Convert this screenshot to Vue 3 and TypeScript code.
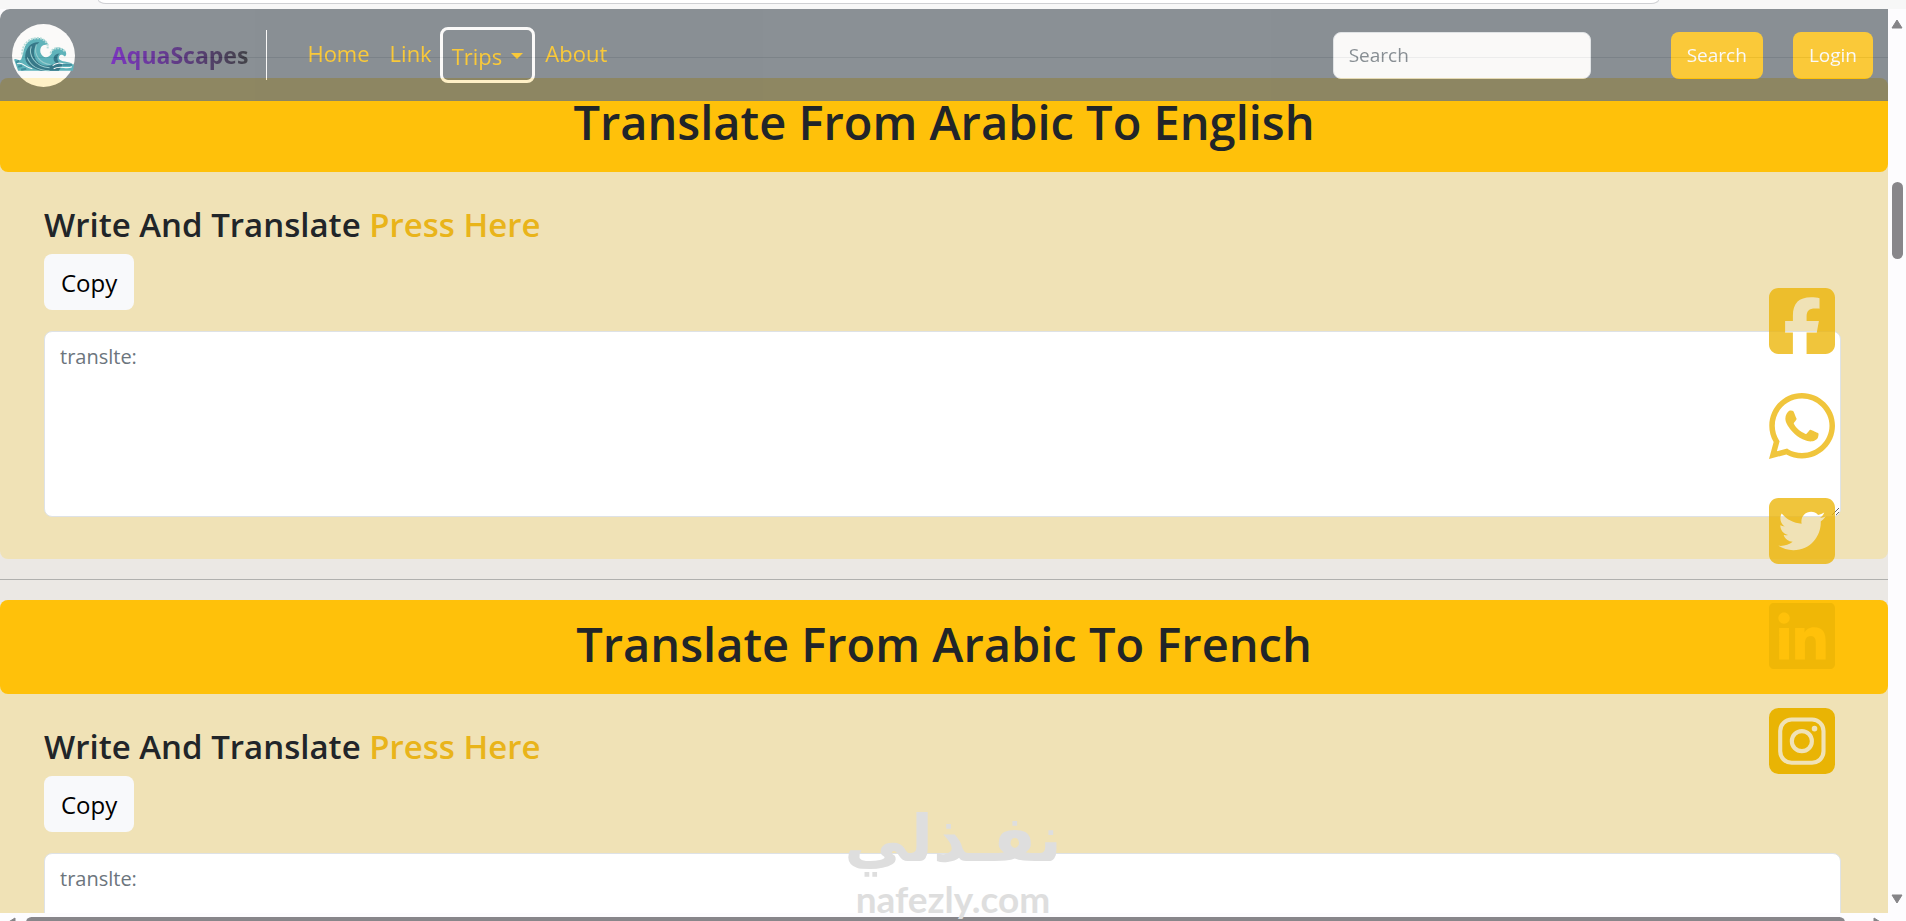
<script setup lang="ts">
import { ref } from 'vue'

interface Section {
  id: string
  title: string
}

interface Social {
  name: string
  path: string
  active?: boolean
}

const sections: Section[] = [
  { id: 'english', title: 'Translate From Arabic To English' },
  { id: 'french', title: 'Translate From Arabic To French' },
]

const texts = ref<Record<string, string>>({ english: '', french: '' })
const query = ref('')

const socials: Social[] = [
  {
    name: 'Facebook',
    path: 'M64 32C28.7 32 0 60.7 0 96V416c0 35.3 28.7 64 64 64h98.2V334.2H109.4V256h52.8V222.3c0-87.1 39.4-127.5 125-127.5c16.2 0 44.2 3.2 55.7 6.4V172c-6-.6-16.5-1-29.6-1c-42 0-58.2 15.9-58.2 57.2V256h83.6l-14.4 78.2H255V480H384c35.3 0 64-28.7 64-64V96c0-35.3-28.7-64-64-64H64z',
  },
  {
    name: 'WhatsApp',
    path: 'M380.9 97.1C339 55.1 283.2 32 223.9 32c-122.4 0-222 99.6-222 222 0 39.1 10.2 77.3 29.6 111L0 480l117.7-30.9c32.4 17.7 68.9 27 106.1 27h.1c122.3 0 224.1-99.6 224.1-222 0-59.3-25.2-115-67.1-157zm-157 341.6c-33.2 0-65.7-8.9-94-25.7l-6.7-4-69.8 18.3L72 359.2l-4.4-7c-18.5-29.4-28.2-63.3-28.2-98.2 0-101.7 82.8-184.5 184.6-184.5 49.3 0 95.6 19.2 130.4 54.1 34.8 34.9 56.2 81.2 56.1 130.5 0 101.8-84.9 184.6-186.6 184.6zm101.2-138.2c-5.5-2.8-32.8-16.2-37.9-18-5.1-1.9-8.8-2.8-12.5 2.8-3.7 5.6-14.3 18-17.6 21.8-3.2 3.7-6.5 4.2-12 1.4-32.6-16.3-54-29.1-75.5-66-5.7-9.8 5.7-9.1 16.3-30.3 1.8-3.7.9-6.9-.5-9.7-1.4-2.8-12.5-30.1-17.1-41.2-4.5-10.8-9.1-9.3-12.5-9.5-3.2-.2-6.9-.2-10.6-.2-3.7 0-9.7 1.4-14.8 6.9-5.1 5.6-19.4 19-19.4 46.3 0 27.3 19.9 53.7 22.6 57.4 2.8 3.7 39.1 59.7 94.8 83.8 35.2 15.2 49 16.5 66.6 13.9 10.7-1.6 32.8-13.4 37.4-26.4 4.6-13 4.6-24.1 3.2-26.4-1.3-2.5-5-3.9-10.5-6.6z',
  },
  {
    name: 'Twitter',
    path: 'M64 32C28.7 32 0 60.7 0 96V416c0 35.3 28.7 64 64 64H384c35.3 0 64-28.7 64-64V96c0-35.3-28.7-64-64-64H64zM351.3 199.3v0c0 86.7-66 186.6-186.6 186.6c-37.2 0-71.7-10.8-100.7-29.4c5.3 .6 10.4 .8 15.8 .8c30.7 0 58.9-10.4 81.4-28c-28.8-.6-53-19.5-61.3-45.5c10.1 1.5 19.2 1.5 29.6-1.2c-30-6.1-52.5-32.5-52.5-64.4v-.8c8.7 4.9 18.9 7.9 29.6 8.3c-9-6-16.4-14.1-21.5-23.6s-7.8-20.2-7.7-31c0-12.2 3.2-23.4 8.9-33.1c32.3 39.8 80.8 65.8 135.2 68.6c-9.3-44.5 24-80.6 64-80.6c18.9 0 35.9 7.9 47.9 20.7c14.8-2.8 29-8.3 41.6-15.8c-4.9 15.2-15.2 28-28.8 36.1c13.2-1.4 26-5.1 37.8-10.2c-8.9 13.1-20.1 24.7-32.9 34c.2 2.8 .2 5.7 .2 8.5z',
  },
  {
    name: 'LinkedIn',
    path: 'M416 32H31.9C14.3 32 0 46.5 0 64.3v383.4C0 465.5 14.3 480 31.9 480H416c17.6 0 32-14.5 32-32.3V64.3c0-17.8-14.4-32.3-32-32.3zM135.4 416H69V202.2h66.5V416zm-33.2-243c-21.3 0-38.5-17.3-38.5-38.5S80.9 96 102.2 96c21.2 0 38.5 17.3 38.5 38.5 0 21.3-17.2 38.5-38.5 38.5zm282.1 243h-66.4V312c0-24.8-.5-56.7-34.5-56.7-34.6 0-39.9 27-39.9 54.9V416h-66.4V202.2h63.7v29.2h.9c8.9-16.8 30.6-34.5 62.9-34.5 67.2 0 79.7 44.3 79.7 101.9V416z',
  },
  {
    name: 'Instagram',
    active: true,
    path: 'M64 32H384A64 64 0 0 1 448 96V416A64 64 0 0 1 384 480H64A64 64 0 0 1 0 416V96A64 64 0 0 1 64 32Z M154 96A92 92 0 0 0 62 188V326A92 92 0 0 0 154 418H292A92 92 0 0 0 384 326V188A92 92 0 0 0 292 96Z M154 124H292A64 64 0 0 1 356 188V326A64 64 0 0 1 292 390H154A64 64 0 0 1 90 326V188A64 64 0 0 1 154 124Z M223 175A82 82 0 1 0 223 339A82 82 0 1 0 223 175Z M223 203A54 54 0 1 1 223 311A54 54 0 1 1 223 203Z M309 153A19 19 0 1 0 309 191A19 19 0 1 0 309 153Z',
  },
]

function copy(id: string) {
  navigator.clipboard?.writeText(texts.value[id])
}
</script>

<template>
  <div class="window">
    <div class="chrome"><div class="address"></div></div>

    <div class="pane">
      <div class="viewport">
        <nav class="navbar">
          <svg class="logo" viewBox="0 0 62 62" aria-label="AquaScapes logo">
            <circle cx="31" cy="31" r="31" fill="#fff" />
            <path d="M2 35C4 33 6 37 9 35C12 28 11 20 18 16C24 12 33 13 36 21C31 19 27 22 28 28C30 34 36 34 39 29C39 24 45 21 51 25C54 27 54 31 52 32C49 29 46 30 46 34C48 38 55 36 61 40L60 46H6Z" fill="#35a3ae" />
            <path d="M13 31C14 22 20 17 27 18C21 22 20 29 24 36C28 42 38 43 43 38C39 35 41 29 47 29C43 32 44 38 50 40L46 46H29C20 44 12 40 13 31Z" fill="#00566c" />
            <path d="M15 33C18 41 26 46 37 46M19 22C16 30 22 42 37 43M24 20C21 30 27 39 38 40" fill="none" stroke="#7fc4c8" stroke-width="1" />
            <path d="M10 30C10 19 18 13 27 14C32 15 36 19 35 24M38 29C39 23 47 22 52 27" fill="none" stroke="#a6d9d6" stroke-width="2" stroke-dasharray="2 1" />
            <path d="M5 39C11 37 13 43 20 44M40 41C47 35 52 42 60 39M41 44C48 40 53 45 59 42" fill="none" stroke="#fff" stroke-width="1" />
            <path d="M4 38L7 36M6 42L10 41M9 45L14 44M50 40L59 40" stroke="#0e7389" stroke-width="2" />
          </svg>
          <a class="brand" href="#"><span class="brand-name">AquaScapes</span></a>
          <div class="links">
            <a class="link" href="#home">Home</a>
            <a class="link" href="#link">Link</a>
            <button class="trips" type="button" aria-haspopup="true">Trips <span class="caret"></span></button>
            <a class="link" href="#about">About</a>
          </div>
          <form class="search" role="search" @submit.prevent>
            <input v-model="query" class="search-input" type="search" placeholder="Search" aria-label="Search" />
            <button class="btn" type="submit">Search</button>
            <button class="btn" type="button">Login</button>
          </form>
        </nav>

        <main class="content">
          <template v-for="section in sections" :key="section.id">
            <hr class="rule" />
            <section class="card">
              <h1 class="title">{{ section.title }}</h1>
              <div class="card-body">
                <h2 class="subtitle">Write And Translate <a class="press" href="#">Press Here</a></h2>
                <button class="copy" type="button" @click="copy(section.id)">Copy</button>
                <textarea v-model="texts[section.id]" class="area" placeholder="translte:" :aria-label="section.title"></textarea>
              </div>
            </section>
          </template>
        </main>

        <div class="socials">
          <a v-for="s in socials" :key="s.name" class="social" :class="{ active: s.active }" href="#" :aria-label="s.name">
            <svg viewBox="0 32 448 448"><path :d="s.path" fill="currentColor" fill-rule="evenodd" /></svg>
          </a>
        </div>
      </div>

      <div class="scroll-y">
        <svg class="arrow" viewBox="0 0 12 10"><path d="M6 1L11 9H1Z" /></svg>
        <div class="track"><div class="thumb-y"></div></div>
        <svg class="arrow" viewBox="0 0 12 10"><path d="M6 9L11 1H1Z" /></svg>
      </div>
    </div>

    <div class="scroll-x">
      <svg class="arrow" viewBox="0 0 10 12"><path d="M1 6L9 1V11Z" /></svg>
      <div class="thumb-x"></div>
      <svg class="arrow" viewBox="0 0 10 12"><path d="M9 6L1 1V11Z" /></svg>
    </div>

    <div class="watermark">
      <span class="mark-ar" lang="ar" dir="rtl">نفـذلي</span>
      <span class="mark-en">nafezly.com</span>
    </div>
  </div>
</template>

<style>
body {
  margin: 0;
}
</style>

<style scoped>
* {
  box-sizing: border-box;
}

.window {
  position: relative;
  display: flex;
  flex-direction: column;
  height: 100vh;
  overflow: hidden;
  background: #fdfcfe;
  color: #212529;
  font-family: "Segoe UI", "Open Sans", "Noto Sans", sans-serif;
}

.chrome {
  flex: none;
  height: 9px;
  padding: 0 247px 0 98px;
  background: #f7f7f7;
}

.address {
  height: 4px;
  border: 1px solid #cfd0d3;
  border-top: 0;
  border-radius: 0 0 8px 8px / 0 0 4px 4px;
  background: #fff;
}

.pane {
  flex: 1;
  display: flex;
  min-height: 0;
}

.viewport {
  position: relative;
  flex: 1;
  min-width: 0;
  overflow: hidden;
  border-top-left-radius: 10px;
  background: #ebe8e4;
}

.navbar {
  position: absolute;
  inset: 0 0 auto;
  z-index: 2;
  display: flex;
  align-items: center;
  height: 92px;
  padding: 0 15px 0 12px;
  background: #6c757d;
  opacity: 0.77;
}

.logo {
  flex: none;
  width: 63px;
  height: 63px;
}

.brand {
  display: flex;
  align-items: center;
  height: 50px;
  margin-left: 36px;
  padding-right: 18px;
  border-right: 1px solid #fff;
  text-decoration: none;
}

.brand-name {
  background: linear-gradient(90deg, #5a00b4, #10121a);
  background-clip: text;
  color: transparent;
  font-size: 23px;
  font-weight: 700;
  line-height: 32px;
}

.links {
  display: flex;
  align-items: center;
  margin-left: 40px;
}

.link {
  margin-right: 20px;
  padding-bottom: 4px;
  color: #ffc107;
  font-size: 22px;
  line-height: 32px;
  text-decoration: none;
}

.trips {
  display: flex;
  align-items: center;
  gap: 9px;
  height: 56px;
  margin: 0 10px 0 -12px;
  padding: 2px 9px 0;
  border: 3px solid #fff;
  border-radius: 8px;
  background: none;
  color: #ffc107;
  font: inherit;
  font-size: 22px;
}

.caret {
  border: 6px solid transparent;
  border-top-color: #ffc107;
  border-bottom: 0;
}

.search {
  display: flex;
  align-items: center;
  margin-left: auto;
}

.search-input {
  width: 258px;
  height: 47px;
  margin-right: 80px;
  padding: 0 15px;
  border: 1px solid #dee2e6;
  border-radius: 8px;
  background: #fff;
  font: inherit;
  font-size: 19px;
}

.search-input::placeholder {
  color: #6c757d;
  opacity: 1;
}

.btn {
  height: 47px;
  padding: 0 16px;
  border: 0;
  border-radius: 8px;
  background: #ffc107;
  color: #fff;
  font: inherit;
  font-size: 19px;
}

.btn + .btn {
  margin-left: 30px;
}

.content {
  padding-top: 28px;
}

.rule {
  height: 1px;
  margin: 20px 0;
  border: 0;
  background: #b0b0ae;
}

.card {
  border-radius: 8px;
  background: #f0e2b6;
}

.title {
  margin: 0;
  padding: 14px 16px 20px;
  border-radius: 8px;
  background: #ffc10a;
  font-size: 47px;
  font-weight: 600;
  line-height: 60px;
  text-align: center;
}

.card-body {
  display: flex;
  flex-direction: column;
  align-items: flex-start;
  padding: 32px 47px 42px 44px;
}

.subtitle {
  margin: 0 0 8px;
  font-size: 33px;
  font-weight: 600;
  line-height: 42px;
}

.press {
  color: #e9b41a;
  text-decoration: none;
}

.copy {
  height: 56px;
  margin-bottom: 21px;
  padding: 0 17px;
  border: 0;
  border-radius: 8px;
  background: #f8f9fb;
  color: #000;
  font: inherit;
  font-size: 24px;
}

.area {
  display: block;
  width: 100%;
  height: 186px;
  padding: 10px 15px;
  border: 1px solid #dee2e6;
  border-radius: 8px;
  background: #fff;
  font: inherit;
  font-size: 20px;
  line-height: 30px;
  resize: vertical;
}

.area::placeholder {
  color: #6c757d;
  opacity: 1;
}

.socials {
  position: absolute;
  top: 279px;
  right: 53px;
  z-index: 1;
  display: flex;
  flex-direction: column;
  gap: 39px;
}

.social {
  width: 66px;
  height: 66px;
  color: #edb506;
  opacity: 0.78;
}

.social.active {
  color: #e9b404;
  opacity: 1;
}

.social svg {
  display: block;
}

.scroll-y {
  flex: none;
  display: flex;
  flex-direction: column;
  align-items: center;
  width: 18px;
  padding: 10px 0 9px;
}

.arrow {
  flex: none;
  width: 12px;
  height: 10px;
  fill: #858487;
  stroke: #858487;
  stroke-width: 1;
  stroke-linejoin: round;
}

.track {
  flex: 1;
  padding-top: 153px;
}

.thumb-y {
  width: 11px;
  height: 77px;
  border-radius: 6px;
  background: #88868a;
}

.scroll-x {
  flex: none;
  display: flex;
  gap: 10px;
  height: 8px;
  padding: 4px 23px 0 6px;
  overflow: hidden;
}

.scroll-x .arrow {
  width: 10px;
  height: 12px;
}

.thumb-x {
  flex: 1;
  height: 11px;
  margin-right: 18px;
  border-radius: 6px;
  background: #88868a;
}

.watermark {
  position: absolute;
  bottom: 0;
  left: 50%;
  z-index: 3;
  display: flex;
  flex-direction: column;
  align-items: center;
  transform: translateX(-50%);
  color: #dedede;
  pointer-events: none;
}

.mark-ar {
  font-family: "DejaVu Sans", sans-serif;
  font-size: 64px;
  font-weight: 700;
  line-height: 76px;
}

.mark-en {
  font-family: Lato, sans-serif;
  font-size: 37px;
  font-weight: 700;
  line-height: 44px;
}
</style>
